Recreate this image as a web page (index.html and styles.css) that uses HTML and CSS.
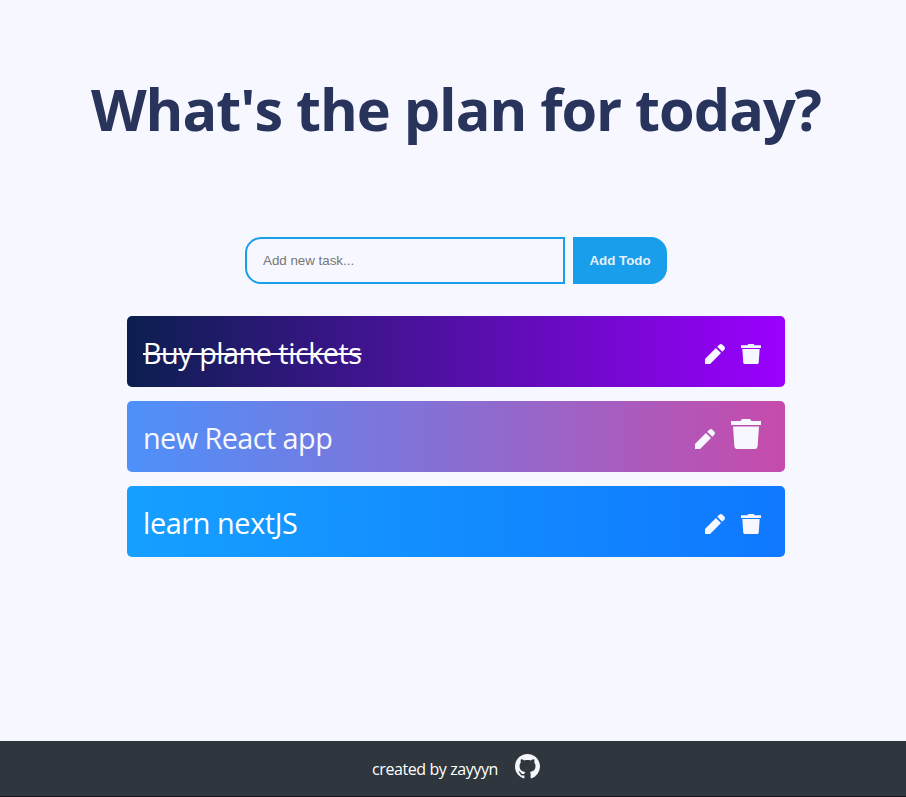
FILE: index.html
```html
<!DOCTYPE html>
<html lang="en">
<head>
<meta charset="utf-8">
<title>Todo</title>
<link rel="stylesheet" href="styles.css">
</head>
<body>
<svg class="defs" aria-hidden="true">
  <symbol id="pencil" viewBox="0 0 20 20"><path d="M0 14.9 10.9 4 16 9.1 5.1 20H0zM12.2 2.7 14.3.7Q15.9-.6 17.4.7L19.3 2.6Q20.6 4.1 19.3 5.7L17.3 7.8z"/></symbol>
  <symbol id="trash" viewBox="0 0 30 30"><path d="M0 2H9.5L11 0H19L20.5 2H30V6H0zM2 7.4H28L26.6 27.6Q26.4 30 24.2 30H5.8Q3.6 30 3.4 27.6z"/></symbol>
</svg>
<main class="app">
  <h1 class="title">What's the plan for today?</h1>
  <form class="form">
    <input class="field" type="text" placeholder="Add new task...">
    <button class="add" type="button">Add Todo</button>
  </form>
  <section class="list">
    <div class="row violet"><span class="label done">Buy plane tickets</span><div class="icons"><svg class="icon"><use href="#pencil"/></svg><svg class="icon"><use href="#trash"/></svg></div></div>
    <div class="row pink"><span class="label react">new React app</span><div class="icons"><svg class="icon"><use href="#pencil"/></svg><svg class="icon large"><use href="#trash"/></svg></div></div>
    <div class="row blue"><span class="label next">learn nextJS</span><div class="icons"><svg class="icon"><use href="#pencil"/></svg><svg class="icon"><use href="#trash"/></svg></div></div>
  </section>
</main>
<footer class="footer">
  <span class="credit">created by zayyyn</span>
  <svg class="github" viewBox="0 0 16 16"><path d="M8 0C3.58 0 0 3.58 0 8c0 3.54 2.29 6.53 5.47 7.59.4.07.55-.17.55-.38 0-.19-.01-.82-.01-1.49-2.01.37-2.53-.49-2.69-.94-.09-.23-.48-.94-.82-1.13-.28-.15-.68-.52-.01-.53.63-.01 1.08.58 1.23.82.72 1.21 1.87.87 2.33.66.07-.52.28-.87.51-1.07-1.78-.2-3.64-.89-3.64-3.95 0-.87.31-1.59.82-2.15-.08-.2-.36-1.02.08-2.12 0 0 .67-.21 2.2.82.64-.18 1.32-.27 2-.27s1.36.09 2 .27c1.53-1.04 2.2-.82 2.2-.82.44 1.1.16 1.92.08 2.12.51.56.82 1.27.82 2.15 0 3.07-1.87 3.75-3.65 3.95.29.25.54.73.54 1.48 0 1.07-.01 1.93-.01 2.2 0 .21.15.46.55.38A8.01 8.01 0 0 0 16 8c0-4.42-3.58-8-8-8z"/></svg>
</footer>
</body>
</html>
```
FILE: styles.css
```css
* { box-sizing: border-box; }
body {
  margin: 0;
  height: 797px;
  display: flex;
  flex-direction: column;
  overflow: hidden;
  background: #f7f8ff;
  font-family: "Open Sans", "Noto Sans", sans-serif;
}
.defs { display: none; }
.app {
  flex: 1;
  display: flex;
  flex-direction: column;
  align-items: center;
  padding-left: 6px;
}
.title {
  margin: 69px 0 88px;
  height: 80px;
  line-height: 80px;
  font-size: 57.6px;
  font-weight: 700;
  letter-spacing: -1.03px;
  white-space: nowrap;
  color: #28345c;
}
.form { display: flex; gap: 8px; height: 47px; margin-bottom: 32px; }
.field, .add { margin: 0; font-family: "Liberation Sans", Arial, sans-serif; font-size: 13.333px; }
.field {
  width: 320px;
  padding: 0 16px;
  border: 2px solid #199eeb;
  border-radius: 16px 0 0 16px;
  background: transparent;
}
.field::placeholder { color: #757575; }
.add {
  width: 94px;
  padding: 0;
  border: 0;
  border-radius: 0 16px 16px 0;
  background: #199eeb;
  color: #e8f0f8;
  font-weight: 700;
}
.list { display: flex; flex-direction: column; gap: 14px; width: 658px; }
.row {
  display: flex;
  justify-content: space-between;
  height: 71px;
  padding: 0 24px 0 16px;
  border-radius: 5px;
  color: #f7f8ff;
}
.violet { background: linear-gradient(90deg, #0b1f4f, #9b00ff); }
.pink { background: linear-gradient(90deg, #4d91fa, #c64bab); }
.blue { background: linear-gradient(90deg, #16a0ff, #0f78ff); }
.label { line-height: 40px; padding-top: 17px; font-size: 28.8px; white-space: nowrap; }
.done { color: #fff; letter-spacing: -0.5px; text-decoration: line-through; text-decoration-thickness: 2px; }
.react { letter-spacing: -0.55px; }
.next { color: #fff; letter-spacing: -0.38px; }
.icons { display: flex; align-items: flex-end; gap: 16px; padding-bottom: 23px; }
.icon { width: 20px; height: 20px; fill: #f7f8ff; }
.large { width: 30px; height: 30px; }
.footer {
  display: flex;
  justify-content: center;
  gap: 17px;
  height: 56px;
  padding: 13px 0 0 6px;
  background: #2f363d;
  border-bottom: 1px solid #15121a;
  color: #fff;
}
.credit { font-size: 16px; line-height: 30px; letter-spacing: -0.42px; }
.github { width: 25px; height: 25px; fill: #f7f8ff; }
```
